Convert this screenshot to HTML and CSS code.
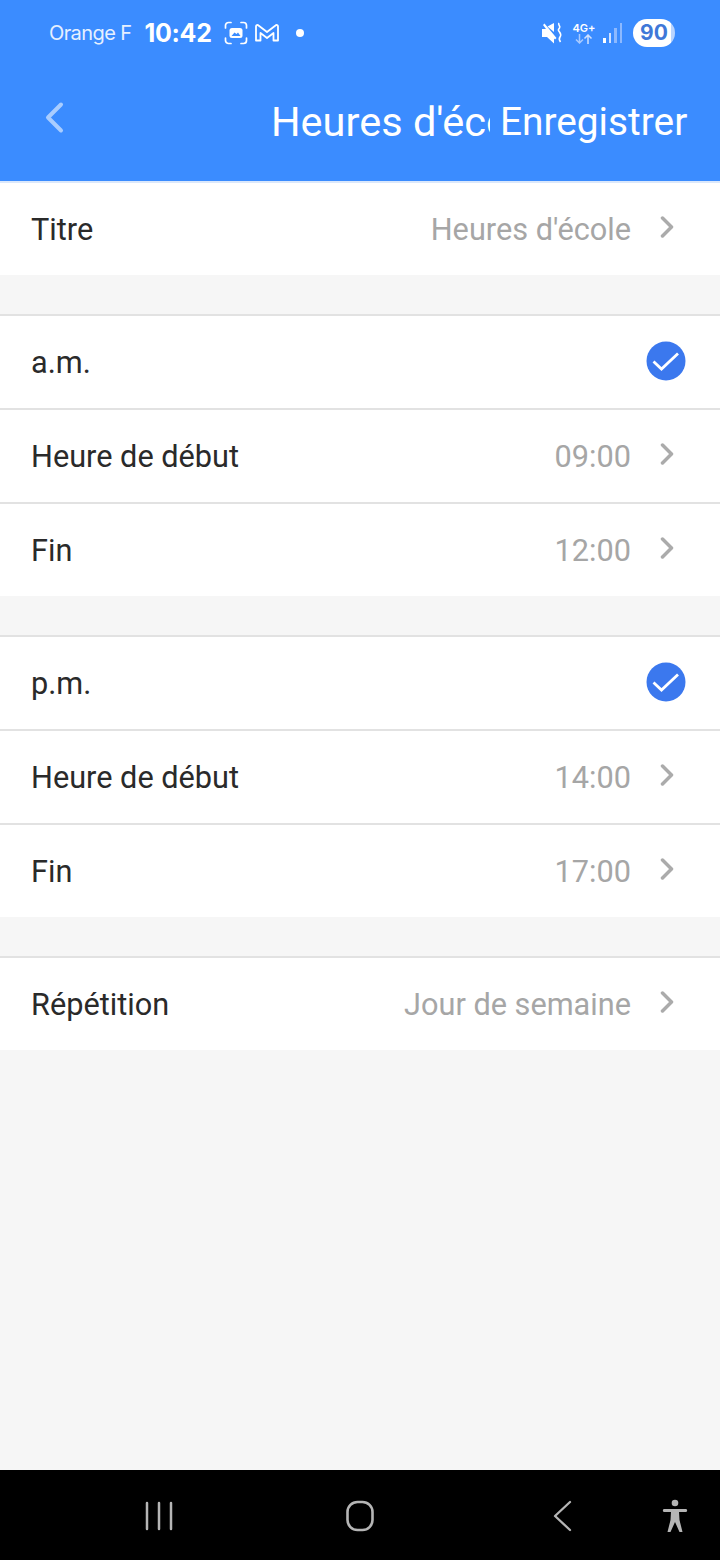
FILE: index.html

```html
<!DOCTYPE html>
<html>

<head>
    <title>Heures d'école</title>
    <link rel="stylesheet" href="styles.css">
</head>

<body>
    <div class="phone">
        <header class="header">
            <div class="status">
                <div class="status-left">
                    <span class="carrier">Orange F</span>
                    <span class="clock">10:42</span>
                    <svg class="ic-shot" width="24" height="24" viewBox="0 0 24 24" fill="none" stroke="#fff" stroke-width="1.7" stroke-linecap="round">
                        <path d="M1.5 7V4.500a3 3 0 0 1 3-3H7M17 1.500h2.500a3 3 0 0 1 3 3V7M22.500 17v2.500a3 3 0 0 1-3 3H17M7 22.500H4.500a3 3 0 0 1-3-3V17" />
                        <rect x="5.500" y="7" width="13" height="10" rx="2.500" fill="#fff" stroke="none" />
                        <path d="M7.500 15l3-3.500 2 1.500 1.500-1.500 2.500 3.500z" fill="#3b8cff" stroke="none" />
                    </svg>
                    <svg class="ic-mail" width="24" height="18" viewBox="0 0 24 18" fill="none" stroke="#fff" stroke-width="1.800" stroke-linejoin="round">
                        <path d="M1 2.500v14h4.500V9l6.500 5 6.500-5v7.500H23v-14c0-1.500-1.500-2-2.500-1L12 8 3.500 1.500C2.500.5 1 1 1 2.500z" />
                    </svg>
                    <span class="dot"></span>
                </div>
                <div class="status-right">
                    <svg class="ic-mute" width="21" height="22" viewBox="0 0 21 22" fill="#fff">
                        <path d="M0 7h4L1 3l1.500-1.500 12 14.500-1.500 1.500-1-1v5L5 15H0z" />
                        <path d="M5.500 4.500L12 1v9z" />
                        <path d="M17 1c-1.500 2 2 3 .5 5s-1.500 2 0 4 2 3 .5 5-1 3 .5 5" fill="none" stroke="#fff" stroke-width="1.600" />
                    </svg>
                    <div class="net">
                        <span class="net-label">4G+</span>
                        <svg class="ic-arrows" width="18" height="10" viewBox="0 0 18 10" fill="none" stroke-width="1.500">
                            <path d="M4.500 0v9M1 5.500L4.500 9 8 5.500" stroke="#a9caff" />
                            <path d="M13 10V1M9.500 4.500L13 1l3.500 3.500" stroke="#cfe1ff" />
                        </svg>
                    </div>
                    <div class="signal">
                        <span class="bar bar-1"></span>
                        <span class="bar bar-2"></span>
                        <span class="bar bar-3"></span>
                        <span class="bar bar-4"></span>
                    </div>
                    <div class="battery">90</div>
                </div>
            </div>
            <div class="toolbar">
                <svg class="back" width="22" height="34" viewBox="0 0 22 34" fill="none" stroke="#a9cdff" stroke-width="4" stroke-linecap="round" stroke-linejoin="round">
                    <path d="M17 4.500L4 17.500l13 13" />
                </svg>
                <div class="title">Heures d'école</div>
                <div class="save">Enregistrer</div>
            </div>
        </header>

        <main class="content">
            <section class="group group-first">
                <div class="row">
                    <span class="row-label">Titre</span>
                    <span class="row-value">Heures d'école</span>
                    <svg class="chevron" width="14" height="22" viewBox="0 0 14 22"><path d="M2.500 2L11.500 11l-9 9" /></svg>
                </div>
            </section>

            <section class="group">
                <div class="row">
                    <span class="row-label">a.m.</span>
                    <svg class="check" width="40" height="40" viewBox="0 0 40 40">
                        <circle cx="20" cy="20" r="19.500" fill="#3b78ee" />
                        <path d="M7.500 20.500l8 7.500L32 12.500" fill="none" stroke="#fff" stroke-width="2.800" />
                    </svg>
                </div>
                <div class="row">
                    <span class="row-label">Heure de début</span>
                    <span class="row-value">09:00</span>
                    <svg class="chevron" width="14" height="22" viewBox="0 0 14 22"><path d="M2.500 2L11.500 11l-9 9" /></svg>
                </div>
                <div class="row">
                    <span class="row-label">Fin</span>
                    <span class="row-value">12:00</span>
                    <svg class="chevron" width="14" height="22" viewBox="0 0 14 22"><path d="M2.500 2L11.500 11l-9 9" /></svg>
                </div>
            </section>

            <section class="group">
                <div class="row">
                    <span class="row-label">p.m.</span>
                    <svg class="check" width="40" height="40" viewBox="0 0 40 40">
                        <circle cx="20" cy="20" r="19.500" fill="#3b78ee" />
                        <path d="M7.500 20.500l8 7.500L32 12.500" fill="none" stroke="#fff" stroke-width="2.800" />
                    </svg>
                </div>
                <div class="row">
                    <span class="row-label">Heure de début</span>
                    <span class="row-value">14:00</span>
                    <svg class="chevron" width="14" height="22" viewBox="0 0 14 22"><path d="M2.500 2L11.500 11l-9 9" /></svg>
                </div>
                <div class="row">
                    <span class="row-label">Fin</span>
                    <span class="row-value">17:00</span>
                    <svg class="chevron" width="14" height="22" viewBox="0 0 14 22"><path d="M2.500 2L11.500 11l-9 9" /></svg>
                </div>
            </section>

            <section class="group">
                <div class="row">
                    <span class="row-label">Répétition</span>
                    <span class="row-value">Jour de semaine</span>
                    <svg class="chevron" width="14" height="22" viewBox="0 0 14 22"><path d="M2.500 2L11.500 11l-9 9" /></svg>
                </div>
            </section>
        </main>

        <nav class="navbar">
            <svg class="nav-recent" width="30" height="30" viewBox="0 0 30 30" fill="none" stroke="#b5b5b5" stroke-width="2.500" stroke-linecap="round">
                <path d="M3 2v26M15 2v26M27 2v26" />
            </svg>
            <svg class="nav-home" width="30" height="32" viewBox="0 0 30 32" fill="none" stroke="#b5b5b5" stroke-width="2.600">
                <rect x="2.500" y="2" width="25" height="28" rx="10" />
            </svg>
            <svg class="nav-back" width="20" height="32" viewBox="0 0 20 32" fill="none" stroke="#b5b5b5" stroke-width="2.300" stroke-linecap="round" stroke-linejoin="round">
                <path d="M18 2L3 16l15 14" />
            </svg>
            <svg class="nav-access" width="26" height="34" viewBox="0 0 26 34" fill="#b5b5b5">
                <circle cx="13" cy="4" r="3.300" />
                <path d="M2 10h22c1.500 0 1.500 3 0 3h-7l.5 8 3 12h-3L13 23l-4.500 10h-3l3-12 .5-8H2c-1.500 0-1.500-3 0-3z" />
            </svg>
        </nav>
    </div>
</body>

</html>
```

FILE: styles.css

```css
body {
    margin: 0;
    padding: 0;
    font-family: Roboto, "Liberation Sans", sans-serif;
}

.phone {
    width: 720px;
    height: 1560px;
    display: flex;
    flex-direction: column;
    background-color: #f6f6f6;
    overflow: hidden;
}

.header {
    height: 181px;
    flex-shrink: 0;
    background-color: #3b8cff;
    color: #fff;
}

.status {
    height: 66px;
    display: flex;
    justify-content: space-between;
    align-items: center;
    padding: 0 45px 0 49px;
}

.status-left,
.status-right {
    display: flex;
    align-items: center;
}

.carrier {
    font-family: Inter, sans-serif;
    font-size: 20px;
    letter-spacing: -0.6px;
    color: #e6f0ff;
}

.clock {
    margin-left: 13px;
    font-family: Inter, sans-serif;
    font-size: 25px;
    font-weight: 700;
    letter-spacing: -0.3px;
}

.ic-shot {
    margin-left: 12px;
}

.ic-mail {
    margin-left: 7px;
}

.dot {
    width: 8px;
    height: 8px;
    margin-left: 17px;
    border-radius: 50%;
    background-color: #fff;
}

.ic-mute {
    margin-right: 9px;
}

.net {
    width: 24px;
    display: flex;
    flex-direction: column;
    align-items: center;
}

.net-label {
    font-family: Inter, sans-serif;
    font-size: 11px;
    font-weight: 600;
    line-height: 11px;
}

.signal {
    display: flex;
    align-items: flex-end;
    gap: 3px;
    height: 20px;
    margin-left: 7px;
}

.bar {
    width: 2.500px;
    background-color: #8db9ff;
}

.bar-1 {
    height: 5px;
    background-color: #fff;
}

.bar-2 {
    height: 10px;
    background-color: #cfe1ff;
}

.bar-3 {
    height: 15px;
}

.bar-4 {
    height: 20px;
}

.battery {
    width: 42px;
    height: 28px;
    margin-left: 11px;
    border-radius: 14px;
    background: linear-gradient(to right, #fff 90%, #b9d4ff 90%);
    color: #3f78d8;
    font-family: Inter, sans-serif;
    font-size: 21px;
    font-weight: 700;
    line-height: 28px;
    text-align: center;
}

.toolbar {
    height: 115px;
    display: flex;
    align-items: center;
    padding: 0 0 5px 44px;
    box-sizing: border-box;
}

.back {
    flex-shrink: 0;
    margin-top: -9px;
}

.title {
    width: 219px;
    margin-left: 205px;
    overflow: hidden;
    white-space: nowrap;
    font-size: 41.500px;
}

.save {
    margin-left: 10px;
    font-size: 38.800px;
    white-space: nowrap;
}

.content {
    flex: 1;
}

.group {
    margin-bottom: 39px;
    border-top: 2px solid #e2e2e2;
    background-color: #fff;
}

.group-first {
    border-top-color: #dbe8fb;
}

.row {
    height: 92px;
    display: flex;
    align-items: center;
    padding: 0 34px 0 31px;
    box-sizing: border-box;
    color: #2a2a2a;
    font-size: 30.700px;
}

.row + .row {
    height: 94px;
    border-top: 2px solid #e2e2e2;
}

.row-label {
    flex: 1;
}

.row-value {
    color: #a6a6a6;
}

.chevron {
    margin: 0 12px 4px 29px;
    fill: none;
    stroke: #ababab;
    stroke-width: 3.500;
    stroke-linejoin: round;
    stroke-linecap: round;
}

.check {
    margin-top: -3px;
}

.navbar {
    height: 90px;
    flex-shrink: 0;
    position: relative;
    background-color: #000;
}

.navbar svg {
    position: absolute;
}

.nav-recent {
    left: 144px;
    top: 31px;
}

.nav-home {
    left: 345px;
    top: 30px;
}

.nav-back {
    left: 552px;
    top: 30px;
}

.nav-access {
    left: 662px;
    top: 29px;
}
```
